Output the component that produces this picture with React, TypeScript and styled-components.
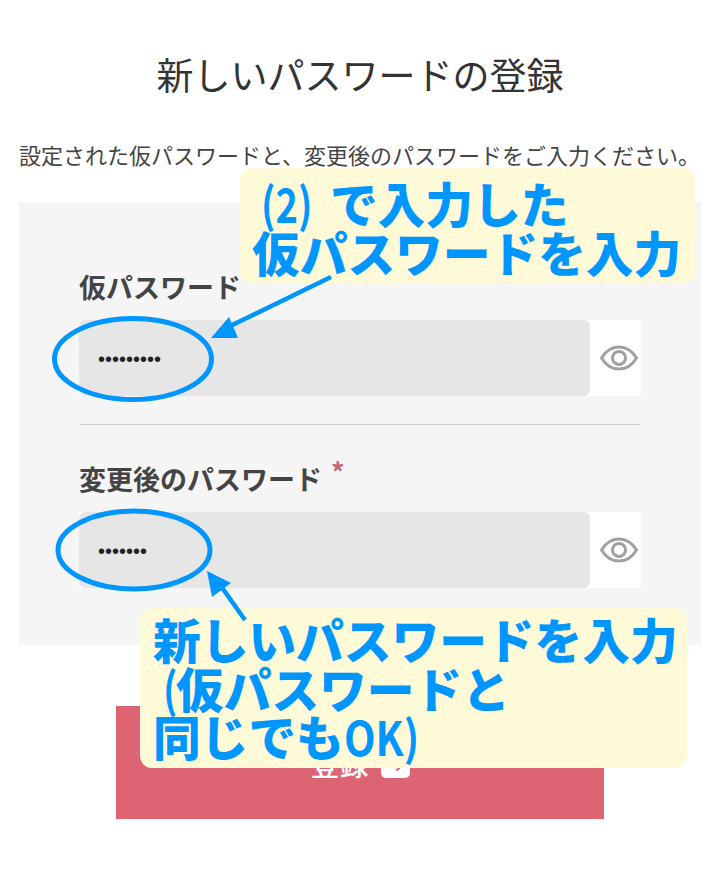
import React from 'react'
import styled, { createGlobalStyle } from 'styled-components'

const GlobalStyle = createGlobalStyle`
  html, body {
    margin: 0;
    padding: 0;
    background: #fff;
  }

  body {
    font-family: "Noto Sans CJK JP", "Noto Sans", sans-serif;
    color: #333;
    overflow: hidden;
  }
`

const Page = styled.main`
  position: relative;
  width: 720px;
  height: 873px;
  overflow: hidden;
`

const Title = styled.h1`
  margin: 0;
  padding-top: 47px;
  height: 54px;
  font-size: 37px;
  line-height: 54px;
  font-weight: 400;
  text-align: center;
  color: #333;
`

const Lead = styled.p`
  margin: 0;
  padding: 37px 0 0 19px;
  height: 32px;
  font-size: 22px;
  line-height: 32px;
  color: #444;
  white-space: nowrap;
`

const Panel = styled.section`
  box-sizing: border-box;
  margin: 32px 0 0 19px;
  width: 682px;
  height: 443px;
  padding: 67px 60px 0;
  background: #f5f5f5;
`

const Field = styled.div`
  & + & {
    margin-top: 28px;
    padding-top: 36px;
    border-top: 1px solid #d0d0d0;
  }
`

const Label = styled.label`
  display: block;
  height: 36px;
  margin-bottom: 15px;
  font-size: 27px;
  line-height: 36px;
  font-weight: 700;
  color: #444;
`

const Required = styled.span`
  position: relative;
  top: -7px;
  margin-left: 9px;
  color: #c9667c;
`

const InputRow = styled.div`
  display: flex;
  height: 76px;
  background: #fff;
`

const Input = styled.div`
  flex: 0 0 511px;
  display: flex;
  align-items: center;
  box-sizing: border-box;
  padding: 2px 0 0 19px;
  border-radius: 6px;
  background: #e6e6e6;
  font-family: "Liberation Sans", sans-serif;
  font-size: 20px;
  color: #222;
`

const EyeButton = styled.div`
  flex: 1;
  display: flex;
  align-items: center;
  justify-content: flex-end;
  padding-right: 3px;
`

const SubmitButton = styled.button`
  display: flex;
  align-items: center;
  justify-content: center;
  gap: 12px;
  margin: 61px 0 0 116px;
  width: 488px;
  height: 113px;
  border: 0;
  background: #dc6473;
  color: #fff;
  font-family: inherit;
  font-size: 29px;
  font-weight: 500;
`

const SubmitIcon = styled.span`
  display: flex;
  align-items: center;
  justify-content: center;
  width: 29px;
  height: 27px;
  margin-top: 3px;
  border-radius: 5px;
  background: #fff;
  color: #dc6473;
  font-size: 18px;
`

const Drawing = styled.svg`
  position: absolute;
  left: 0;
  top: 0;
  pointer-events: none;
`

const Callout = styled.div<{ $left: number; $top: number; $width: number; $height: number; $padTop: number; $pad: number }>`
  position: absolute;
  left: ${props => props.$left}px;
  top: ${props => props.$top}px;
  width: ${props => props.$width}px;
  height: ${props => props.$height}px;
  box-sizing: border-box;
  padding: ${props => props.$padTop}px 0 0 ${props => props.$pad}px;
  border-radius: 12px;
  background: #fef9d7;
  color: #0096ff;
  font-size: 47.7px;
  line-height: 48.5px;
  font-weight: 900;
  white-space: nowrap;
`

const CalloutLine = styled.div<{ $indent?: number }>`
  padding-left: ${props => props.$indent || 0}px;
`

/* the latin glyphs in the callouts are condensed */
const Narrow = styled.span<{ $width: number; $scale: number }>`
  display: inline-block;
  width: ${props => props.$width}px;
  font-weight: 700;
  transform: scaleX(${props => props.$scale});
  transform-origin: left center;
`

const Eye = () => (
  <svg width="38" height="26" viewBox="0 0 38 26" fill="none" stroke="#a0a0a0">
    <path d="M1.5 13C6 5.5 12 2 19 2s13 3.500 17.500 11C32 20.500 26 24 19 24S6 20.500 1.500 13Z" strokeWidth="3" strokeLinejoin="round" />
    <circle cx="19" cy="13" r="6.500" strokeWidth="3" />
  </svg>
)

const App: React.FC = () => (
  <Page>
    <GlobalStyle />
    <Title>新しいパスワードの登録</Title>
    <Lead>設定された仮パスワードと、変更後のパスワードをご入力ください。</Lead>
    <Panel>
      <Field>
        <Label>仮パスワード</Label>
        <InputRow>
          <Input>•••••••••</Input>
          <EyeButton><Eye /></EyeButton>
        </InputRow>
      </Field>
      <Field>
        <Label>変更後のパスワード<Required>*</Required></Label>
        <InputRow>
          <Input>•••••••</Input>
          <EyeButton><Eye /></EyeButton>
        </InputRow>
      </Field>
    </Panel>
    <SubmitButton>
      登録
      <SubmitIcon>➔</SubmitIcon>
    </SubmitButton>

    <Callout $left={240} $top={168} $width={455} $height={115} $padTop={11} $pad={12}>
      <CalloutLine $indent={9}><Narrow $width={58} $scale={0.8}>(2)</Narrow> で入力した</CalloutLine>
      <CalloutLine>仮パスワードを入力</CalloutLine>
    </Callout>
    <Callout $left={140} $top={608} $width={547} $height={160} $padTop={7} $pad={13}>
      <CalloutLine>新しいパスワードを入力</CalloutLine>
      <CalloutLine $indent={10}><Narrow $width={13} $scale={0.8}>(</Narrow>仮パスワードと</CalloutLine>
      <CalloutLine>同じでも<Narrow $width={74} $scale={0.86}>OK)</Narrow></CalloutLine>
    </Callout>

    <Drawing width="720" height="873" viewBox="0 0 720 873" fill="none">
      <ellipse cx="133" cy="359" rx="78.500" ry="40.500" stroke="#0096ff" strokeWidth="5" />
      <ellipse cx="134" cy="550" rx="76" ry="39" stroke="#0096ff" strokeWidth="5" />
      <path d="M331 277L224 329" stroke="#0096ff" strokeWidth="4.500" />
      <path d="M211 338L229 317L238 338Z" fill="#0096ff" />
      <path d="M245 620L218 582" stroke="#0096ff" strokeWidth="4.500" />
      <path d="M207 571L231 583L212 597Z" fill="#0096ff" />
    </Drawing>
  </Page>
)

export default App
